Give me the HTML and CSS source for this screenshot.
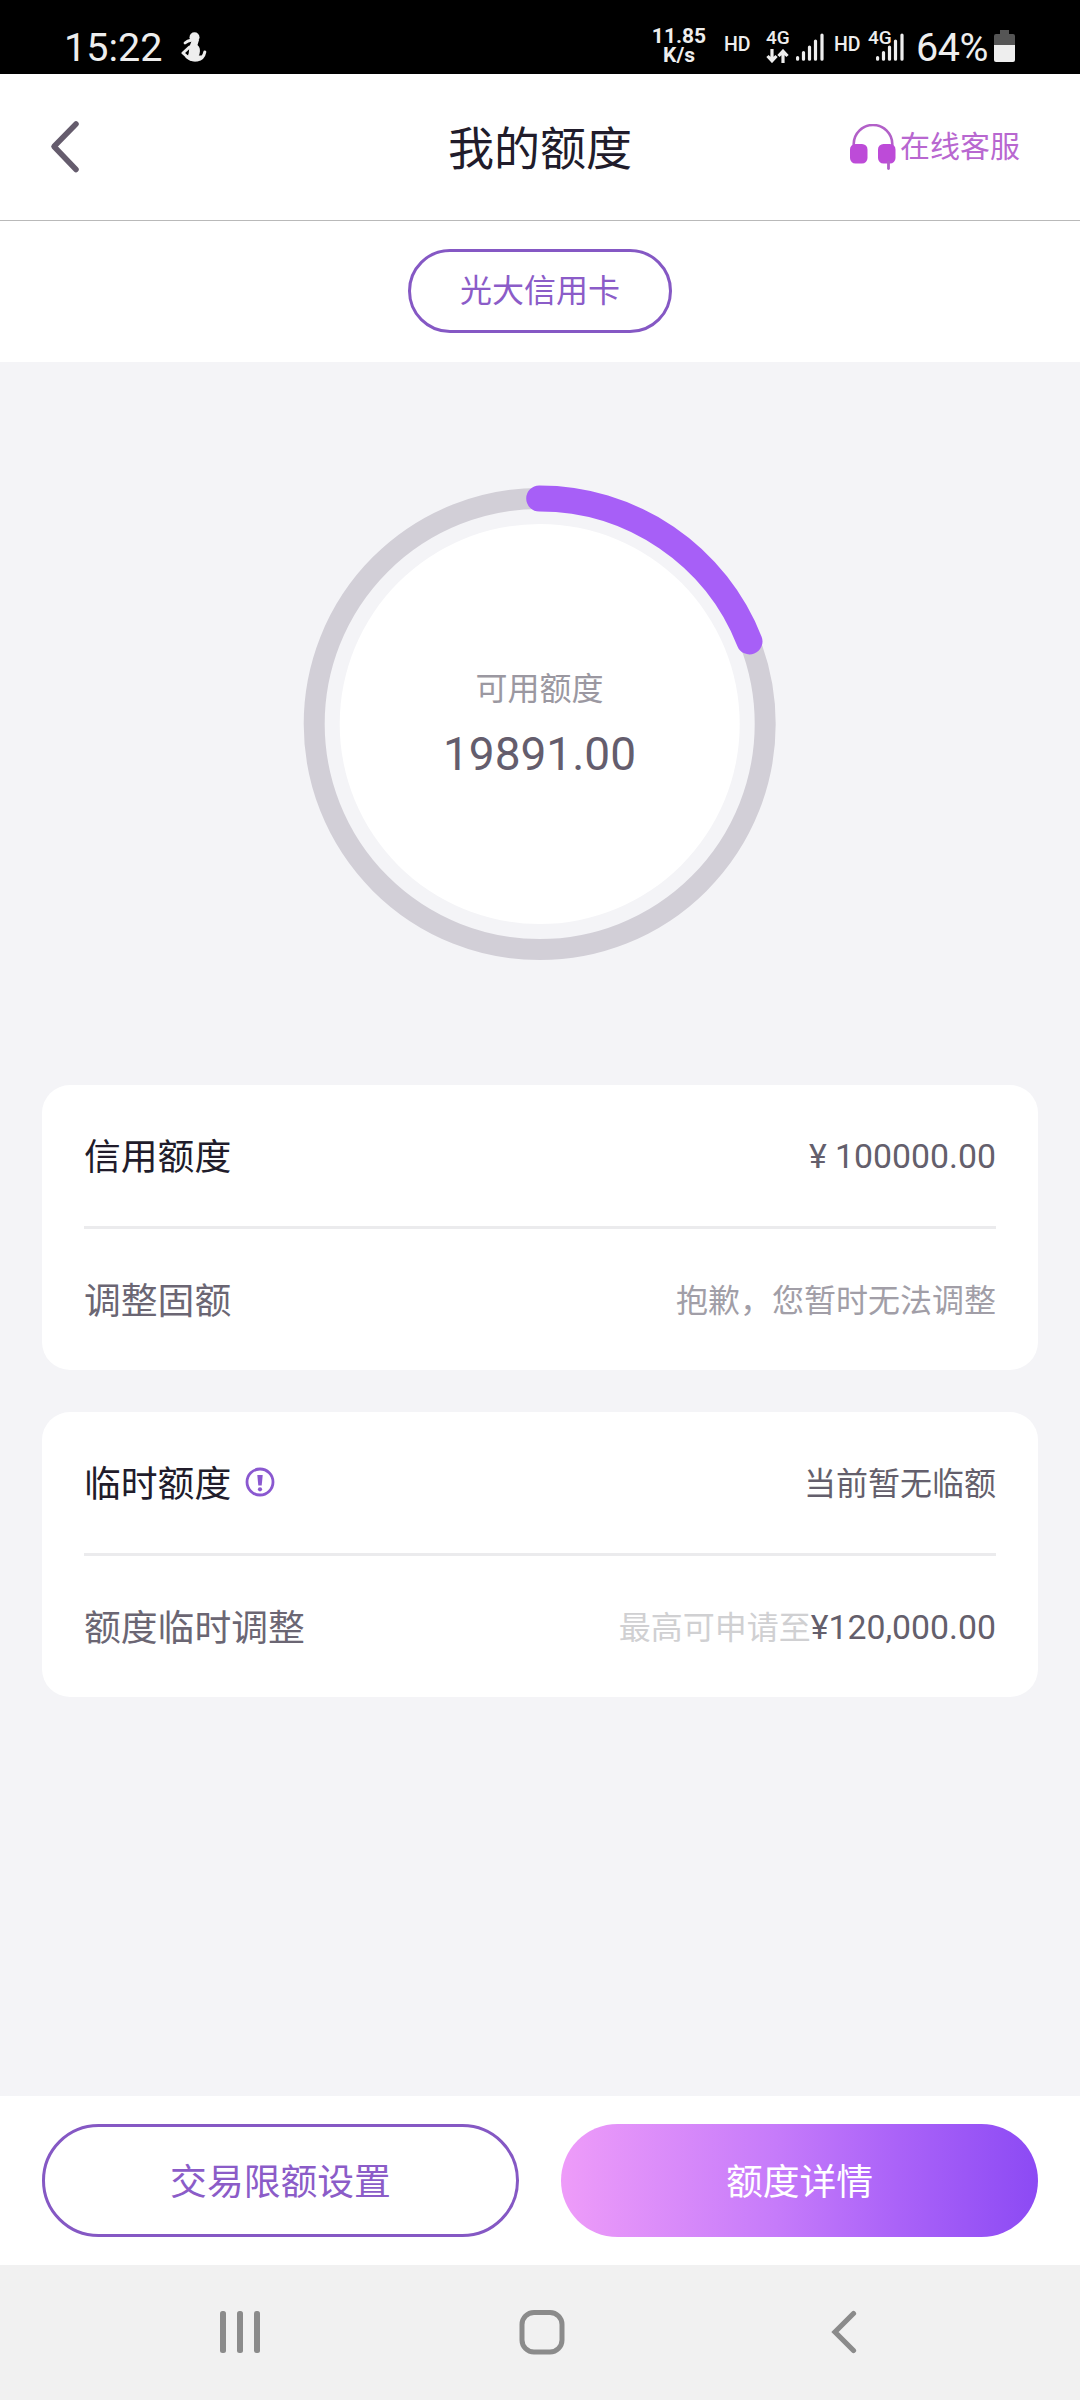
FILE: index.html
```html
<!DOCTYPE html>
<html lang="zh-CN">
<head>
<meta charset="utf-8">
<title>我的额度</title>
<link rel="stylesheet" href="styles.css">
</head>
<body>
<div class="screen">
  <div class="statusbar">
    <span class="clock">15:22</span>
    <svg class="note-icon" width="26" height="30" viewBox="0 0 26 30" fill="#eee" stroke="#eee" stroke-linecap="round" stroke-linejoin="round">
      <circle cx="13.500" cy="5.200" r="5" stroke="none"/>
      <path d="M11 8h7l-1.500 5c2.500 2 3 5 2 9l-2 5H8l-1-4c1.500-2 .5-6 2-10z" stroke="none"/>
      <path d="M4 11c1.500-1.500 4-2.500 7-3" fill="none" stroke-width="2.800"/>
      <path d="M8.500 15L2 21l5 4.500" fill="none" stroke-width="3"/>
      <path d="M6 25c5 4.500 16 5 17.800-5" fill="none" stroke-width="3"/>
      <path d="M5 23.500h16c-2 7-12 8.500-16 0z" stroke="none"/>
    </svg>
    <div class="speed"><span>11.85</span><span>K/s</span></div>
    <span class="hd">HD</span>
    <div class="net">
      <span class="gen">4G</span>
      <svg width="23" height="14" viewBox="0 0 23 14" fill="none" stroke="#eee" stroke-width="3.200"><path d="M6 0v11M1.500 7L6 11.800 10.500 7M17 14V3M12.500 7L17 2.200 21.500 7"/></svg>
    </div>
    <svg class="signal" width="28" height="28" viewBox="0 0 28 28" stroke="#eee" stroke-width="3.200" stroke-linecap="round"><path d="M1.600 24.500v1.700M7.500 19.500v6.700M13.500 14v12.200M19.500 8v18.200M26 2v24.200"/></svg>
    <span class="hd hd-second">HD</span>
    <div class="net net-second">
      <span class="gen">4G</span>
      <svg class="signal-over" width="28" height="28" viewBox="0 0 28 28" stroke="#eee" stroke-width="3.200" stroke-linecap="round"><path d="M1.600 24.500v1.700M7.500 19.500v6.700M13.500 14v12.200M19.500 8v18.200M26 2v24.200"/></svg>
    </div>
    <span class="percent">64%</span>
    <svg class="battery" width="21" height="32" viewBox="0 0 21 32"><path d="M6 0h9v4h4q2 0 2 2v9H0V6q0-2 2-2h4z" fill="#555"/><path d="M0 15h21v15q0 2-2 2H2q-2 0-2-2z" fill="#eee"/></svg>
  </div>

  <header class="header">
    <svg class="back" width="30" height="54" viewBox="0 0 30 54" fill="none" stroke="#655c6d" stroke-width="5.500" stroke-linecap="round" stroke-linejoin="round"><path d="M26 4L4 26.500l22 23"/></svg>
    <h1 class="title">我的额度</h1>
    <div class="service">
      <svg width="46" height="46" viewBox="0 0 46 46"><path d="M3.700 24v-4a19.300 19 0 0 1 38.600 0v4" fill="none" stroke="#b260c8" stroke-width="2.600"/><rect x="0" y="20" width="17.500" height="19.500" rx="5.500" fill="#bd4bd8"/><rect x="28" y="20" width="17.500" height="19.500" rx="5.500" fill="#bd4bd8"/><path d="M38.500 38v6.500" stroke="#b260c8" stroke-width="2.800" stroke-linecap="round"/></svg>
      <span>在线客服</span>
    </div>
  </header>

  <div class="tabs"><button class="tab">光大信用卡</button></div>

  <main class="content">
    <div class="gauge">
      <svg class="ring" width="480" height="480" viewBox="-239.700 -240 480 480" fill="none">
        <circle r="225.500" stroke="#d2cfd7" stroke-width="21"/>
        <circle r="200" fill="#fff"/>
        <path d="M-.5-225.500A225.500 225.500 0 0 1 209.800-82.600" stroke="#a75ff7" stroke-width="26" stroke-linecap="round"/>
      </svg>
      <div class="gauge-text">
        <span class="gauge-label">可用额度</span>
        <span class="gauge-value">19891.00</span>
      </div>
    </div>

    <section class="card">
      <div class="row"><span class="label">信用额度</span><span class="value amount">¥ 100000.00</span></div>
      <div class="row"><span class="label sub">调整固额</span><span class="value muted">抱歉，您暂时无法调整</span></div>
    </section>

    <section class="card">
      <div class="row">
        <span class="label">临时额度</span>
        <svg class="info" width="30" height="30" viewBox="0 0 30 30"><circle cx="15" cy="15" r="13" fill="none" stroke="#8a58d0" stroke-width="2.800"/><path d="M12.300 8h5.400l-1 10.500h-3.400z" fill="#8a58d0"/><circle cx="15" cy="22.300" r="2.100" fill="#8a58d0"/></svg>
        <span class="value">当前暂无临额</span>
      </div>
      <div class="row"><span class="label sub">额度临时调整</span><span class="value"><span class="faint">最高可申请至</span><span class="amount">¥120,000.00</span></span></div>
    </section>
  </main>

  <footer class="actions">
    <button class="btn outline">交易限额设置</button>
    <button class="btn filled">额度详情</button>
  </footer>

  <nav class="navbar">
    <svg class="nav-recent" width="40" height="42" viewBox="0 0 40 42" fill="#8b8b8b"><rect width="6" height="42" rx="2.500"/><rect x="17" width="6" height="42" rx="2.500"/><rect x="34" width="6" height="42" rx="2.500"/></svg>
    <svg class="nav-home" width="46" height="46" viewBox="0 0 46 46" fill="none" stroke="#8b8b8b" stroke-width="5"><rect x="3" y="3.500" width="40" height="39.500" rx="12"/></svg>
    <svg class="nav-back" width="26" height="44" viewBox="0 0 26 44" fill="none" stroke="#8b8b8b" stroke-width="5.200" stroke-linecap="round"><path d="M22.500 3.500L4 22l18.500 18.500"/></svg>
  </nav>
</div>
</body>
</html>
```
FILE: styles.css
```css
* {
  box-sizing: border-box;
}

body {
  margin: 0;
  font-family: Roboto, "Noto Sans CJK SC", sans-serif;
  color: #211c2b;
}

svg {
  display: block;
  flex: none;
}

button {
  font-family: inherit;
  padding: 0;
}

.screen {
  width: 1080px;
  height: 2400px;
  display: flex;
  flex-direction: column;
  background: #f4f4f7;
}

.statusbar {
  height: 74px;
  flex: none;
  display: flex;
  align-items: flex-start;
  background: #000;
  color: #eee;
  padding-left: 64px;
  white-space: nowrap;
}

.clock,
.percent {
  font-size: 39.5px;
  line-height: 46px;
  margin-top: 25px;
}

.clock {
  width: 117px;
}

.note-icon {
  margin-top: 32px;
}

.speed {
  width: 60px;
  margin: 27px 0 0 442px;
  display: flex;
  flex-direction: column;
  align-items: center;
  font-size: 21px;
  line-height: 19px;
  font-weight: 700;
}

.hd {
  width: 30px;
  margin: 33px 0 0 15px;
  font-size: 19.5px;
  line-height: 24px;
  font-weight: 500;
}

.net {
  width: 24px;
  margin: 27px 0 0 12px;
}

.gen {
  display: block;
  font-size: 19px;
  line-height: 22px;
  font-weight: 500;
}

.signal {
  margin: 33px 0 0 6px;
}

.hd-second {
  margin-left: 10px;
}

.net-second {
  margin-left: 4px;
  position: relative;
}

.signal-over {
  position: absolute;
  left: 8px;
  top: 6px;
}

.percent {
  width: 74px;
  margin-left: 24px;
  letter-spacing: -0.5px;
}

.battery {
  margin: 30px 0 0 4px;
}

.header {
  height: 147px;
  flex: none;
  display: grid;
  grid-template-columns: 1fr auto 1fr;
  align-items: center;
  padding: 0 60px 0 50px;
  background: #fff;
  border-bottom: 1px solid #b9b9b9;
}

.title {
  margin: 3px 0 0 10px;
  font-size: 46px;
  line-height: 60px;
  font-weight: 400;
}

.service {
  justify-self: end;
  display: flex;
  align-items: center;
  gap: 4px;
  font-size: 30px;
  line-height: 40px;
  color: #b867d0;
}

.tabs {
  height: 141px;
  flex: none;
  display: flex;
  justify-content: center;
  align-items: flex-start;
  padding-top: 28px;
  background: #fff;
}

.tab {
  width: 264px;
  height: 84px;
  border: 3px solid #8558c4;
  border-radius: 42px;
  background: none;
  color: #8b5cc8;
  font-size: 32px;
  line-height: 40px;
}

.content {
  flex: 1;
  display: flex;
  flex-direction: column;
  align-items: center;
}

.gauge {
  display: grid;
  place-items: center;
  margin: 121.500px 0 121px;
}

.ring,
.gauge-text {
  grid-area: 1 / 1;
}

.gauge-text {
  display: flex;
  flex-direction: column;
  align-items: center;
  margin-right: 1px;
}

.gauge-label {
  font-size: 32px;
  line-height: 60px;
  color: #9b98a1;
}

.gauge-value {
  font-size: 46px;
  line-height: 70px;
  color: #645d6d;
}

.card {
  width: 996px;
  padding: 0 42px;
  margin-bottom: 42px;
  border-radius: 28px;
  background: #fff;
}

.row {
  height: 141px;
  display: flex;
  align-items: center;
}

.row + .row {
  height: 144px;
  border-top: 3px solid #ebebed;
}

.label {
  font-size: 36.8px;
  line-height: 50px;
  padding-top: 6px;
}

.sub {
  color: #6b6673;
}

.info {
  margin-left: 14px;
}

.value {
  margin-left: auto;
  padding-top: 3px;
  font-size: 32px;
  line-height: 44px;
  color: #645f6c;
}

.amount {
  font-size: 33.8px;
}

.muted {
  color: #a19ea7;
}

.faint {
  color: #d0d0d2;
}

.actions {
  height: 169px;
  flex: none;
  display: flex;
  justify-content: space-between;
  padding: 28px 42px;
  background: #fff;
}

.btn {
  width: 477px;
  height: 113px;
  padding-top: 5px;
  border: 0;
  border-radius: 57px;
  font-size: 36.8px;
  line-height: 50px;
}

.outline {
  border: 3px solid #8558c4;
  background: #fff;
  color: #8b5cc8;
}

.filled {
  background: linear-gradient(90deg, #ee9cf9, #c67bfa 45%, #ab63f8 70%, #8c4af4);
  color: #fff;
}

.navbar {
  height: 135px;
  flex: none;
  display: flex;
  align-items: center;
  padding: 0 0 1px 220px;
  background: #f1f1f1;
}

.nav-home {
  margin-left: 259px;
}

.nav-back {
  margin-left: 266px;
}
```
